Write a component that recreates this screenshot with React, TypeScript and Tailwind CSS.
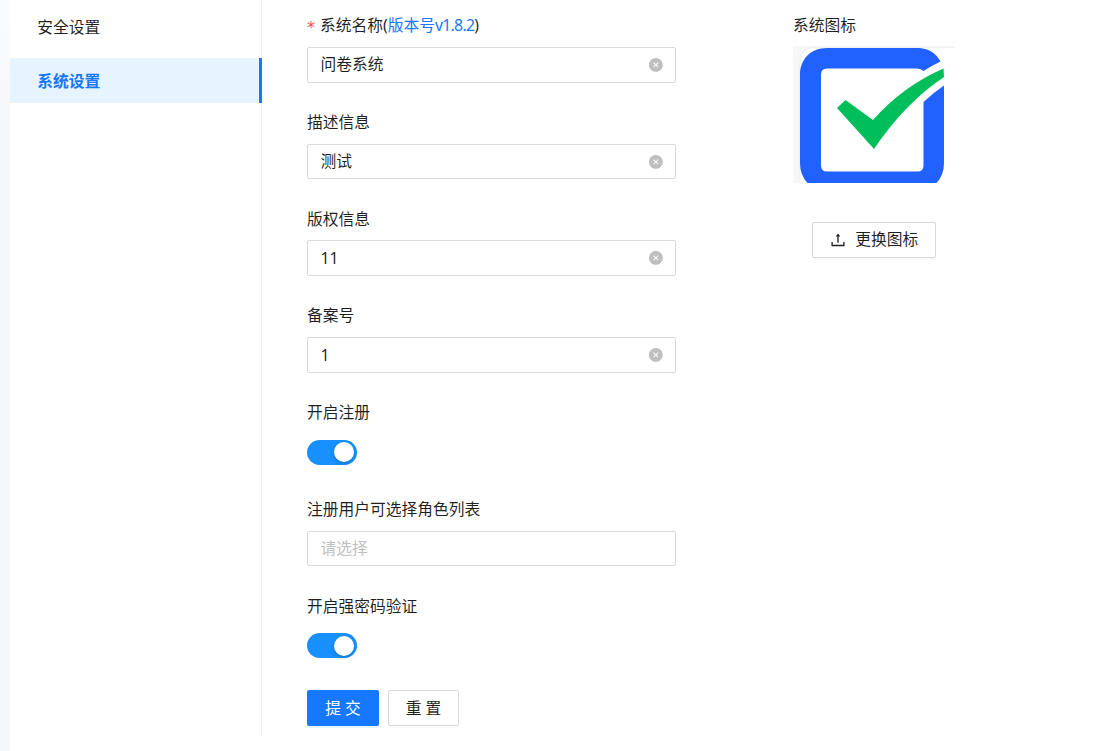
import { useState } from "react";
import type { ReactNode } from "react";
import { AiFillCloseCircle, AiOutlineUpload } from "react-icons/ai";
import clsx from "clsx";

const menus = [
  { key: "security", label: "安全设置" },
  { key: "system", label: "系统设置" },
];

interface FormItemProps {
  label: ReactNode;
  required?: boolean;
  children: ReactNode;
}

function FormItem({ label, required, children }: FormItemProps) {
  return (
    <div className="mb-[27.25px]">
      <div className="flex h-[24.75px] items-center leading-[24.75px]">
        {required && (
          <span className="mr-[5px] w-[8px] pt-[5px] font-['DejaVu_Sans'] text-[16px] text-[#ff4d4f]">*</span>
        )}
        <span>{label}</span>
      </div>
      <div className="mt-[9px] flex h-[35.75px] items-center">{children}</div>
    </div>
  );
}

function TextInput({ initial = "", placeholder }: { initial?: string; placeholder?: string }) {
  const [value, setValue] = useState(initial);

  return (
    <div className="flex h-full w-full items-center rounded-[2px] border border-[#d9d9d9] bg-white pr-[11.25px] pl-[12.5px]">
      <input
        value={value}
        placeholder={placeholder}
        onChange={(e) => setValue(e.target.value)}
        className="min-w-0 flex-1 outline-none placeholder:text-[#bfbfbf]"
      />
      {value && (
        <button onClick={() => setValue("")}>
          <AiFillCloseCircle className="size-[15.75px] text-[#bfbfbf]" />
        </button>
      )}
    </div>
  );
}

function Switch() {
  const [checked, setChecked] = useState(true);

  return (
    <button
      onClick={() => setChecked(!checked)}
      className={clsx(
        "mt-px flex h-[24.75px] w-[49.5px] items-center rounded-full px-[2.25px]",
        checked ? "justify-end bg-[#1890ff]" : "justify-start bg-black/25"
      )}
    >
      <span className="size-[20.25px] rounded-full bg-white shadow-[0_2px_4px_rgba(0,35,11,0.2)]" />
    </button>
  );
}

function Logo() {
  return (
    <svg width="162" height="137" viewBox="0 0 162 137">
      <rect width="162" height="137" fill="#fff" />
      <path d="M0 0H162V1.5H22Q7 2 7 17V137H0Z" fill="#f7f7f7" />
      <path d="M162 1.2H22Q7 2 7 17V137" fill="none" stroke="#ebebeb" strokeWidth="0.8" />
      <path
        fillRule="evenodd"
        fill="#2161ff"
        d="M34 2H125C135 2 143 7 147.5 15.5Q138 20 130.5 25Q128 22.5 124 22.5H34Q28 22.5 28 28.5V119.5Q28 125.500 34 125.500H124.500Q130.500 125.500 130.500 119.500V56Q140 47 151 39.500V117Q151 129 143.500 137H14.500Q7 129 7 117V29C7 13 18 2 34 2Z"
      />
      <path fill="#00bf5b" d="M44 62L52.500 54L80 74Q110 40 150.500 22.500L151 31Q112 57 81 103Z" />
    </svg>
  );
}

export default function App() {
  const [active, setActive] = useState("system");

  return (
    <div className="flex h-[751px] w-[1101px] overflow-hidden bg-gradient-to-b from-[#fafbfc] to-[#f5f7fa] to-20% pl-[10px] font-['Noto_Sans','Noto_Sans_CJK_SC',sans-serif] text-[15.75px] leading-[24.75px] text-black/88">
      <main className="flex flex-1 bg-white">
        <aside className="flex h-[736px] w-[252px] shrink-0 flex-col gap-[9px] border-r border-[#f0f0f0] pt-1">
          {menus.map((m) => (
            <button
              key={m.key}
              onClick={() => setActive(m.key)}
              className={clsx(
                "-mr-px h-[45px] shrink-0 border-r-[3px] pt-[2px] pl-[27.25px] text-left",
                active === m.key
                  ? "border-[#1677ff] bg-[#e6f4ff] font-bold text-[#1677ff]"
                  : "border-transparent"
              )}
            >
              {m.label}
            </button>
          ))}
        </aside>

        <section className="ml-[45px] w-[369px] shrink-0 pt-[13.15px]">
          <FormItem
            required
            label={
              <>
                系统名称(<a className="text-[#1677ff]">版本号<span className="tracking-[-0.7px]">v1.8.2</span></a>)
              </>
            }
          >
            <TextInput initial="问卷系统" />
          </FormItem>
          <FormItem label="描述信息">
            <TextInput initial="测试" />
          </FormItem>
          <FormItem label="版权信息">
            <TextInput initial="11" />
          </FormItem>
          <FormItem label="备案号">
            <TextInput initial="1" />
          </FormItem>
          <FormItem label="开启注册">
            <Switch />
          </FormItem>
          <FormItem label="注册用户可选择角色列表">
            <TextInput placeholder="请选择" />
          </FormItem>
          <FormItem label="开启强密码验证">
            <Switch />
          </FormItem>

          <div className="flex gap-[9px]">
            <button className="h-9 w-[72px] rounded-[2px] bg-[#1677ff] text-white shadow-[0_2px_0_rgba(5,145,255,0.1)]">
              提 交
            </button>
            <button className="h-9 w-[71px] rounded-[2px] border border-[#d9d9d9] bg-white shadow-[0_2px_0_rgba(0,0,0,0.02)]">
              重 置
            </button>
          </div>
        </section>

        <section className="ml-[117px] flex w-[162px] flex-col pt-[13.25px]">
          <div className="mb-2">系统图标</div>
          <Logo />
          <button className="mt-[39px] ml-[19px] flex h-9 w-[124px] items-center justify-center gap-[8.5px] rounded-[2px] border border-[#d9d9d9] bg-white pr-px shadow-[0_2px_0_rgba(0,0,0,0.02)]">
            <AiOutlineUpload className="size-[18px]" />
            <span className="pb-[2px]">更换图标</span>
          </button>
        </section>
      </main>
    </div>
  );
}
